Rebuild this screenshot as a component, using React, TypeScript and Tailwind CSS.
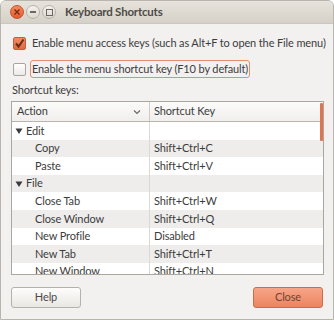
import React from 'react'

const rows: { label: string; key: string; group?: boolean }[] = [
  { label: 'Edit', key: '', group: true },
  { label: 'Copy', key: 'Shift+Ctrl+C' },
  { label: 'Paste', key: 'Shift+Ctrl+V' },
  { label: 'File', key: '', group: true },
  { label: 'Close Tab', key: 'Shift+Ctrl+W' },
  { label: 'Close Window', key: 'Shift+Ctrl+Q' },
  { label: 'New Profile', key: 'Disabled' },
  { label: 'New Tab', key: 'Shift+Ctrl+T' },
  { label: 'New Window', key: 'Shift+Ctrl+N' },
]

function Checkbox({ checked }: { checked?: boolean }) {
  if (checked) {
    return (
      <span className="w-[13px] h-[13px] rounded-[2px] border border-[#c5603c] bg-gradient-to-b from-[#f08a62] to-[#dd6a42] flex items-center justify-center shrink-0">
        <svg width="11" height="11" viewBox="0 0 11 11">
          <path d="M2 5.5 L4.5 8.5 L9.5 1.5" fill="none" stroke="#6b2a14" strokeWidth="2" />
        </svg>
      </span>
    )
  }
  return (
    <span className="w-[13px] h-[13px] rounded-[2px] border border-[#aaa59d] bg-gradient-to-b from-[#ffffff] to-[#ebe9e6] shrink-0" />
  )
}

export default function App() {
  return (
    <div
      className="w-[334px] h-[320px] bg-[#f2f1f0] border border-[#b9b5ad] rounded-t-[6px] overflow-hidden flex flex-col text-[#3c3c3c]"
      style={{ fontFamily: 'Lato, "Noto Sans", sans-serif' }}
    >
      {/* title bar */}
      <div className="h-[23px] shrink-0 bg-gradient-to-b from-[#e6e3dc] to-[#d5d1c8] border-b border-[#cbc7be] flex items-center pl-[9px]">
        <span className="w-[14px] h-[14px] rounded-full bg-gradient-to-b from-[#f58a5e] to-[#e05a2c] border border-[#c4542c] flex items-center justify-center">
          <svg width="8" height="8" viewBox="0 0 8 8">
            <path d="M1.5 1.5 L6.5 6.5 M6.5 1.5 L1.5 6.5" stroke="#7a2a10" strokeWidth="1.4" />
          </svg>
        </span>
        <span className="ml-[2px] w-[14px] h-[14px] rounded-full bg-gradient-to-b from-[#f4f2ee] to-[#dcd8d0] border border-[#b7b2a9] flex items-center justify-center">
          <span className="w-[6px] h-[1.5px] bg-[#6a6660]" />
        </span>
        <span className="ml-[2px] w-[14px] h-[14px] rounded-full bg-gradient-to-b from-[#f4f2ee] to-[#dcd8d0] border border-[#b7b2a9] flex items-center justify-center">
          <span className="w-[7px] h-[7px] border border-[#6a6660]" />
        </span>
        <span className="ml-[9px] text-[11.5px] tracking-[-0.2px] font-bold text-[#4e4b46] whitespace-nowrap">Keyboard Shortcuts</span>
      </div>

      <div className="flex flex-col px-[10px] pt-[10px] text-[11px] tracking-[-0.13px]">
        <label className="flex items-center gap-[6px] pl-[2px] h-[18px] whitespace-nowrap">
          <Checkbox checked />
          <span>Enable menu access keys (such as Alt+F to open the File menu)</span>
        </label>
        <label className="flex items-center gap-[4px] pl-[2px] mt-[8px] h-[18px] whitespace-nowrap">
          <Checkbox />
          <span className="border border-[#e0906e] rounded-[3px] px-[1px] h-[18px] flex items-center">
            Enable the menu shortcut key (F10 by default)
          </span>
        </label>
        <div className="mt-[5px] pl-[1px] leading-[14px]">Shortcut keys:</div>

        <div className="relative mt-[4px] border border-[#aba69e] bg-white h-[174px] overflow-hidden w-[313px]">
          <div className="flex h-[20px] border-b border-[#b9b5ad] bg-gradient-to-b from-[#fbfbfa] to-[#f1efed]">
            <div className="w-[138px] flex items-center justify-between pl-[5px] pr-[8px] border-r border-[#cfcbc4]">
              <span>Action</span>
              <svg width="8" height="6" viewBox="0 0 8 6">
                <path d="M1 1.5 L4 4.5 L7 1.5" fill="none" stroke="#6a6660" strokeWidth="1.1" />
              </svg>
            </div>
            <div className="flex items-center pl-[4px]">Shortcut Key</div>
          </div>
          {rows.map((r, i) => (
            <div
              key={r.label}
              className={`flex h-[17.6px] items-center ${i % 2 === 1 ? 'bg-[#eeedec]' : 'bg-white'}`}
            >
              <div className="w-[138px] h-full flex items-center border-r border-[#dcd9d4]">
                {r.group ? (
                  <>
                    <svg className="ml-[3px]" width="8" height="8" viewBox="0 0 8 8">
                      <path d="M0.5 1.5 L7.5 1.5 L4 7 Z" fill="#3c3c3c" />
                    </svg>
                    <span className="ml-[3px]">{r.label}</span>
                  </>
                ) : (
                  <span className="ml-[23px]">{r.label}</span>
                )}
              </div>
              <div className="pl-[4px]">{r.key}</div>
            </div>
          ))}
          <div className="absolute right-0 top-[1px] w-[3px] h-[38px] bg-[#e0764f] rounded-[1px]" />
        </div>

        <div className="flex justify-between mt-[12px]">
          <button className="w-[70px] h-[21px] rounded-[3px] border border-[#b6b1a9] bg-gradient-to-b from-[#fdfdfc] to-[#e9e7e3] text-[#4c4a46]">
            Help
          </button>
          <button className="w-[70px] h-[21px] rounded-[3px] border border-[#d16b46] bg-gradient-to-b from-[#f7a588] to-[#ec8460] text-[#6e4636]">
            Close
          </button>
        </div>
      </div>
    </div>
  )
}
